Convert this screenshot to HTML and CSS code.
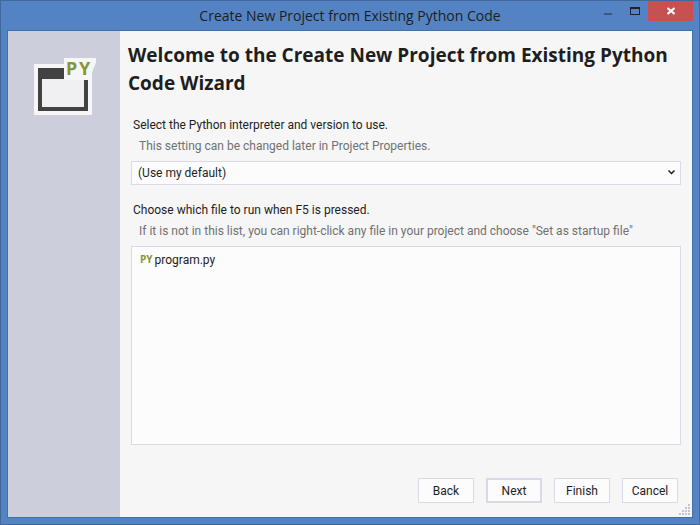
FILE: index.html
```html
<!DOCTYPE html>
<html lang="en">
<head>
<meta charset="utf-8">
<title>Create New Project from Existing Python Code</title>
<link rel="stylesheet" href="styles.css">
</head>
<body>
<div class="window">
  <header class="titlebar">
    <div class="caption">Create New Project from Existing Python Code</div>
    <div class="controls">
      <button class="control" type="button" aria-label="Minimize">
        <svg width="8" height="12" viewBox="0 0 8 12"><path fill="#3d5679" d="M0 8h8v2H0z"/></svg>
      </button>
      <button class="control" type="button" aria-label="Maximize">
        <svg width="10" height="12" viewBox="0 0 10 12"><path fill="#1e222a" fill-rule="evenodd" d="M0 2h10v8H0zM1 4v5h8V4z"/></svg>
      </button>
      <button class="control close" type="button" aria-label="Close">
        <svg width="8" height="12" viewBox="0 0 8 12"><path stroke="#fff" stroke-width="2" d="M.5 3l7 6M7.500 3l-7 6"/></svg>
      </button>
    </div>
  </header>
  <div class="client">
    <aside class="sidebar">
      <svg class="logo" width="64" height="66" viewBox="0 -6 64 66">
        <path fill="#f6f6f6" d="M1 7h30V1h32v4l-4 10v43H1z"/>
        <path fill="#424242" d="M5 11h50v43H5z"/>
        <path fill="#f0eff1" d="M9 22h42v28H9z"/>
        <path fill="#f6f6f6" d="M31 1h32v4l-4 10v8H31z"/>
        <path fill="#424242" d="M51 23h4v4h-4z"/>
        <text class="logo-text" x="33 46" y="18">PY</text>
      </svg>
    </aside>
    <main class="page">
      <h1>Welcome to the Create New Project from Existing Python Code Wizard</h1>
      <form class="form">
        <label class="label" for="interpreter">Select the Python interpreter and version to use.</label>
        <p class="hint">This setting can be changed later in Project Properties.</p>
        <div class="combo">
          <select id="interpreter"><option>(Use my default)</option></select>
          <svg class="arrow" width="7" height="5" viewBox="0 0 7 5"><path fill="none" stroke="#1e1e1e" stroke-width="1.500" d="M.5 .5l3 3 3-3"/></svg>
        </div>
        <div class="label second" id="files-label">Choose which file to run when F5 is pressed.</div>
        <p class="hint">If it is not in this list, you can right-click any file in your project and choose "Set as startup file"</p>
        <ul class="files" role="listbox" aria-labelledby="files-label">
          <li class="file" role="option"><span class="badge">PY</span>program.py</li>
        </ul>
        <div class="actions">
          <button type="button">Back</button>
          <button type="button" class="default">Next</button>
          <button type="button">Finish</button>
          <button type="button">Cancel</button>
        </div>
      </form>
    </main>
    <svg class="grip" width="11" height="11" viewBox="0 0 11 11"><path fill="#bfc4d6" d="M9 0h2v2H9zM6 3h2v2H6zM9 3h2v2H9zM3 6h2v2H3zM6 6h2v2H6zM9 6h2v2H9zM0 9h2v2H0zM3 9h2v2H3zM6 9h2v2H6zM9 9h2v2H9z"/></svg>
  </div>
</div>
</body>
</html>
```
FILE: styles.css
```css
* { box-sizing: border-box; }

body {
  margin: 0;
  color: #1e1e1e;
  font: 12px/16px Roboto, "Noto Sans", sans-serif;
}

h1, p, ul { margin: 0; padding: 0; }
button, select { font: inherit; color: inherit; }

.window {
  display: flex;
  flex-direction: column;
  height: 100vh;
  padding: 0 6px 6px;
  border: 1px solid #41689c;
  background: #5383c2;
}

.titlebar {
  position: relative;
  flex: none;
  height: 29px;
}

.caption {
  padding: 5px 0 4px;
  text-align: center;
  font-family: "Open Sans", sans-serif;
  font-size: 14px;
  line-height: 20px;
}

.controls {
  position: absolute;
  top: 0;
  right: 0;
  display: flex;
}

.control {
  display: flex;
  align-items: center;
  justify-content: center;
  width: 27px;
  height: 20px;
  padding: 0;
  border: 0;
  background: none;
}

.control.close {
  width: 45px;
  background: #c75050;
}

.client {
  position: relative;
  flex: 1;
  display: flex;
  min-height: 0;
  border: 1px solid #4470a8;
  background: #f6f6f6;
}

.sidebar {
  flex: none;
  width: 112px;
  padding: 20px 25px;
  background: #cccedb;
}

.logo { display: block; }

.logo-text {
  fill: #879636;
  font: bold 18px "Noto Sans", sans-serif;
}

.page {
  flex: 1;
  display: flex;
  flex-direction: column;
  padding: 10px 11px 14px 8px;
}

h1 {
  font-family: "Open Sans", sans-serif;
  font-size: 19px;
  line-height: 28px;
}

.form {
  flex: 1;
  display: flex;
  flex-direction: column;
  padding: 20px 0 0 3px;
}

.label { padding-left: 2px; }
.label.second { margin-top: 17px; }

.hint {
  margin: 5px 0 7px;
  padding-left: 8px;
  color: #717171;
}

.combo { position: relative; }

.combo select {
  display: block;
  appearance: none;
  width: 100%;
  height: 24px;
  padding: 0 6px;
  border: 1px solid #d9dae6;
  border-radius: 0;
  background: #fcfcfc;
}

.arrow {
  position: absolute;
  top: 9px;
  right: 6px;
}

.files {
  flex: 1;
  padding: 5px 8px;
  border: 1px solid #d9dae6;
  background: #fcfcfc;
  list-style: none;
}

.file {
  display: flex;
  gap: 2px;
}

.badge {
  color: #879636;
  font-family: "Open Sans", sans-serif;
  font-weight: bold;
  font-size: 10px;
  line-height: 14px;
}

.actions {
  display: flex;
  justify-content: flex-end;
  gap: 12px;
  padding: 33px 3px 0 0;
}

.actions button {
  width: 56px;
  height: 25px;
  padding: 0;
  border: 1px solid #d9dae6;
  background: #fcfcfc;
}

.actions .default { border-width: 2px; }

.grip {
  position: absolute;
  right: 2px;
  bottom: 2px;
}
```
